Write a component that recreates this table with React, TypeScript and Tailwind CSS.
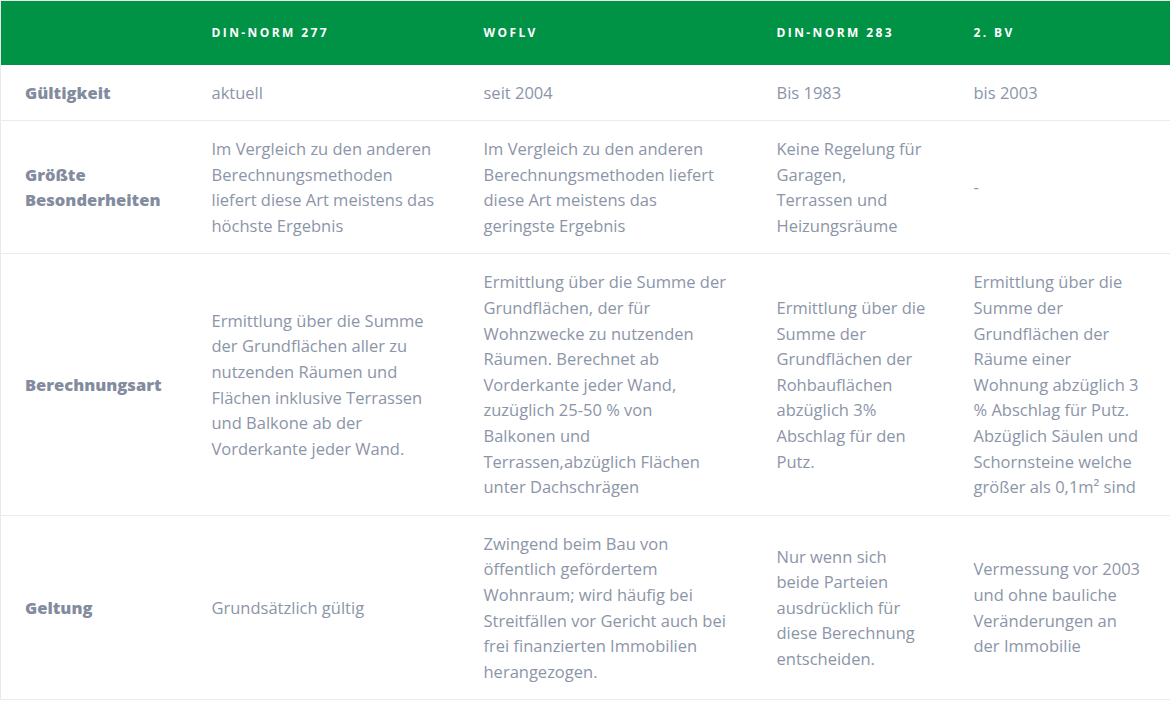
const HEADERS = ["DIN-Norm 277", "WoFlV", "DIN-Norm 283", "2. BV"];

type Row = { label: string[]; cells: string[][] };

const ROWS: Row[] = [
  {
    label: ["Gültigkeit"],
    cells: [["aktuell"], ["seit 2004"], ["Bis 1983"], ["bis 2003"]],
  },
  {
    label: ["Größte", "Besonderheiten"],
    cells: [
      ["Im Vergleich zu den anderen", "Berechnungsmethoden", "liefert diese Art meistens das", "höchste Ergebnis"],
      ["Im Vergleich zu den anderen", "Berechnungsmethoden liefert", "diese Art meistens das", "geringste Ergebnis"],
      ["Keine Regelung für", "Garagen,", "Terrassen und", "Heizungsräume"],
      ["-"],
    ],
  },
  {
    label: ["Berechnungsart"],
    cells: [
      [
        "Ermittlung über die Summe",
        "der Grundflächen aller zu",
        "nutzenden Räumen und",
        "Flächen inklusive Terrassen",
        "und Balkone ab der",
        "Vorderkante jeder Wand.",
      ],
      [
        "Ermittlung über die Summe der",
        "Grundflächen, der für",
        "Wohnzwecke zu nutzenden",
        "Räumen. Berechnet ab",
        "Vorderkante jeder Wand,",
        "zuzüglich 25-50 % von",
        "Balkonen und",
        "Terrassen,abzüglich Flächen",
        "unter Dachschrägen",
      ],
      [
        "Ermittlung über die",
        "Summe der",
        "Grundflächen der",
        "Rohbauflächen",
        "abzüglich 3%",
        "Abschlag für den",
        "Putz.",
      ],
      [
        "Ermittlung über die",
        "Summe der",
        "Grundflächen der",
        "Räume einer",
        "Wohnung abzüglich 3",
        "% Abschlag für Putz.",
        "Abzüglich Säulen und",
        "Schornsteine welche",
        "größer als 0,1m² sind",
      ],
    ],
  },
  {
    label: ["Geltung"],
    cells: [
      ["Grundsätzlich gültig"],
      [
        "Zwingend beim Bau von",
        "öffentlich gefördertem",
        "Wohnraum; wird häufig bei",
        "Streitfällen vor Gericht auch bei",
        "frei finanzierten Immobilien",
        "herangezogen.",
      ],
      ["Nur wenn sich", "beide Parteien", "ausdrücklich für", "diese Berechnung", "entscheiden."],
      ["Vermessung vor 2003", "und ohne bauliche", "Veränderungen an", "der Immobilie"],
    ],
  },
];

function Lines({ lines }: { lines: string[] }) {
  return (
    <>
      {lines.map((l, i) => (
        <span key={i} className="block whitespace-nowrap">
          {l}
        </span>
      ))}
    </>
  );
}

export default function App() {
  return (
    <div className="w-[1170px] bg-white font-['Open_Sans',sans-serif]">
      <table className="w-[1170px] table-fixed border-collapse border border-[#e9e9e9]">
        <colgroup>
          <col className="w-[192px]" />
          <col className="w-[272px]" />
          <col className="w-[293px]" />
          <col className="w-[197px]" />
          <col className="w-[216px]" />
        </colgroup>
        <thead>
          <tr className="h-[64px] bg-[#009245]">
            <th />
            {HEADERS.map((h) => (
              <th
                key={h}
                className="pl-[19px] pt-[1px] text-left text-[12px] font-bold uppercase tracking-[0.2em] text-white"
              >
                {h}
              </th>
            ))}
          </tr>
        </thead>
        <tbody>
          {ROWS.map((row, r) => (
            <tr key={r} className="border-b border-[#ebebeb]">
              <td className="py-[15px] pl-[24px] align-middle text-[16.5px] leading-[25.6px] font-extrabold text-[#838b9e]">
                <Lines lines={row.label} />
              </td>
              {row.cells.map((c, i) => (
                <td
                  key={i}
                  className="py-[15px] pl-[19px] align-middle text-[16.5px] leading-[25.6px] text-[#8c95a8]"
                >
                  <Lines lines={c} />
                </td>
              ))}
            </tr>
          ))}
        </tbody>
      </table>
    </div>
  );
}
